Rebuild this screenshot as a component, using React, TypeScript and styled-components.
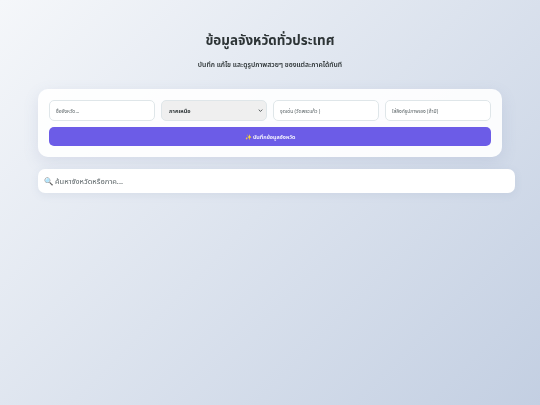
import React from 'react';
import { createGlobalStyle, styled } from 'styled-components';

const chevron =
  "url(\"data:image/svg+xml,%3Csvg xmlns='http://www.w3.org/2000/svg' viewBox='0 0 8 5'%3E%3Cpath d='M1 1l3 3 3-3' fill='none' stroke='%232d3436' stroke-width='1.3'/%3E%3C/svg%3E\")";

const GlobalStyle = createGlobalStyle`
  html, body {
    margin: 0;
    padding: 0;
    height: 100%;
  }
  body {
    font-family: 'Noto Sans', 'Noto Sans Thai', 'Liberation Sans', sans-serif;
    background: linear-gradient(135deg, #f5f7fa 0%, #c3cfe2 100%);
    min-height: 405px;
    overflow: hidden;
  }
`;

const Page = styled.div`
  box-sizing: border-box;
  height: 405px;
  padding: 29px 25px 0 38px;
`;

const Header = styled.header`
  width: 464px;
  text-align: center;
  will-change: transform;
`;

const Title = styled.h1`
  margin: 0;
  font-size: 13.4px;
  line-height: 22px;
  font-weight: 700;
  color: #2d3436;
`;

const Subtitle = styled.p`
  margin: 8px 0 0;
  font-size: 6.8px;
  line-height: 11px;
  font-weight: 600;
  color: #2d3436;
`;

const FormCard = styled.form`
  box-sizing: border-box;
  width: 464px;
  height: 68px;
  margin-top: 19px;
  padding: 11px;
  display: flex;
  flex-direction: column;
  gap: 6px;
  background: rgba(255, 255, 255, 0.9);
  border-radius: 10px;
  box-shadow: 0 5px 16px rgba(100, 116, 160, 0.14);
  will-change: transform;
`;

const Fields = styled.div`
  display: grid;
  grid-template-columns: repeat(4, 1fr);
  gap: 6px;
`;

const Input = styled.input`
  box-sizing: border-box;
  width: 100%;
  height: 21px;
  padding: 0 6px;
  border: 1px solid #dfe6e9;
  border-radius: 5px;
  background: #fff;
  font-family: inherit;
  font-size: 5px;
  color: #2d3436;

  &::placeholder {
    color: #5a6366;
    opacity: 1;
  }
`;

const Select = styled.select`
  box-sizing: border-box;
  width: 100%;
  height: 21px;
  padding: 0 7px;
  border: 1px solid #dfe6e9;
  border-radius: 5px;
  appearance: none;
  background: #efefef ${chevron} no-repeat right 3px center / 5px 3px;
  font-family: inherit;
  font-size: 5.5px;
  font-weight: 700;
  color: #2d3436;
`;

const SubmitButton = styled.button`
  height: 19px;
  padding: 0;
  border: none;
  border-radius: 5px;
  background: #6c5ce7;
  font-family: inherit;
  font-size: 5.5px;
  font-weight: 600;
  color: #fff;
`;

const SearchBox = styled.input`
  display: block;
  box-sizing: border-box;
  width: 477px;
  height: 24px;
  margin-top: 12px;
  padding: 0 6px;
  border: none;
  border-radius: 7px;
  background: #fff;
  box-shadow: 0 2px 8px rgba(100, 116, 160, 0.1);
  font-family: inherit;
  font-size: 7.5px;
  will-change: transform;

  &::placeholder {
    color: #5a6366;
    opacity: 1;
  }
`;

export default function App() {
  return (
    <Page>
      <GlobalStyle />
      <Header>
        <Title>ข้อมูลจังหวัดทั่วประเทศ</Title>
        <Subtitle>บันทึก แก้ไข และดูรูปภาพสวยๆ ของแต่ละภาคได้ทันที</Subtitle>
      </Header>
      <FormCard onSubmit={e => e.preventDefault()}>
        <Fields>
          <Input placeholder="ชื่อจังหวัด..." />
          <Select defaultValue="north">
            <option value="north">ภาคเหนือ</option>
            <option value="central">ภาคกลาง</option>
            <option value="south">ภาคใต้</option>
          </Select>
          <Input placeholder="จุดเด่น (วัดพระแก้ว )" />
          <Input placeholder="ใส่ลิงก์รูปภาพเอง (ถ้ามี)" />
        </Fields>
        <SubmitButton type="submit">✨ บันทึกข้อมูลจังหวัด</SubmitButton>
      </FormCard>
      <SearchBox placeholder="🔍 ค้นหาจังหวัดหรือภาค..." />
    </Page>
  );
}
